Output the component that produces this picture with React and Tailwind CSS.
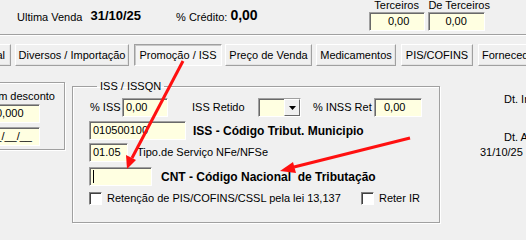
import React from 'react';

const font = { fontFamily: '"Liberation Sans", Arial, sans-serif' };

const sunken =
  'border border-t-[#a0a0a0] border-l-[#a0a0a0] border-r-white border-b-white shadow-[inset_1px_1px_0_#696969]';

const Field = ({ className = '', children }) => (
  <div className={`${sunken} shrink-0 bg-[#ffffe1] h-[19px] flex items-center text-[11px] text-black ${className}`}>
    {children}
  </div>
);

const Tab = ({ label, active, className = '' }) => (
  <div
    className={`shrink-0 h-[22px] flex items-center justify-center text-[11px] whitespace-nowrap overflow-hidden ${
      active
        ? 'border border-t-[#a0a0a0] border-l-[#a0a0a0] border-r-white border-b-white shadow-[inset_1px_1px_0_#c8c8c8] bg-[#f5f5f5]'
        : 'border border-t-white border-l-white border-r-[#a0a0a0] border-b-[#a0a0a0] shadow-[inset_-1px_-1px_0_#e3e3e3]'
    } ${className}`}
  >
    {label}
  </div>
);

const Check = () => (
  <div className="shrink-0 w-[13px] h-[13px] bg-white border border-t-[#808080] border-l-[#808080] border-r-white border-b-white shadow-[inset_1px_1px_0_#404040]" />
);

export default function App() {
  return (
    <div className="relative w-[526px] h-[240px] bg-[#f0f0f0] overflow-hidden text-black" style={font}>
      {/* header */}
      <div className="flex h-[34px] text-[11px]">
        <span className="shrink-0 ml-[17px] mt-[9px] whitespace-nowrap">Ultima Venda</span>
        <span className="shrink-0 ml-[8px] mt-[8px] text-[13px] font-bold leading-[16px]">31/10/25</span>
        <span className="shrink-0 ml-[35px] mt-[9px] whitespace-nowrap">% Crédito:</span>
        <span className="shrink-0 ml-[3px] mt-[7px] text-[14px] font-bold leading-[17px]">0,00</span>
        <div className="shrink-0 ml-[111px] flex flex-col items-center w-[56px] -mt-[1px]">
          <span className="leading-[13px] whitespace-nowrap">Terceiros</span>
          <Field className="w-[56px] justify-center pl-[4px]">0,00</Field>
        </div>
        <div className="shrink-0 ml-[3px] flex flex-col items-center w-[57px] -mt-[1px]">
          <span className="leading-[13px] ml-[6px] whitespace-nowrap">De Terceiros</span>
          <Field className="w-[57px] justify-center">0,00</Field>
        </div>
      </div>
      <div className="h-[2px] border-t border-t-[#a0a0a0] border-b border-b-white" />

      {/* tabs */}
      <div className="flex items-start mt-[8px] h-[22px] gap-[4px]">
        <Tab label="Fiscal" className="w-[40px] -ml-[29px] justify-end pr-[5px]" />
        <Tab label="Diversos / Importação" className="w-[114px]" />
        <Tab label="Promoção / ISS" active className="w-[88px] ml-[1px]" />
        <Tab label="Preço de Venda" className="w-[87px] -ml-[1px]" />
        <Tab label="Medicamentos" className="w-[80px]" />
        <Tab label="PIS/COFINS" className="w-[72px] ml-[1px]" />
        <Tab label="Fornecedores" className="w-[70px] ml-[1px] justify-start pl-[3px]" />
      </div>

      {/* body */}
      <div className="flex items-start text-[11px]">
        <div className="shrink-0 -ml-[30px] mt-[16px] w-[95px] h-[68px] border border-[#a0a0a0] shadow-[1px_1px_0_white,inset_1px_1px_0_white] flex flex-col items-end pr-[24px]">
          <span className="mt-[7px] whitespace-nowrap leading-[13px] -mr-[15px]">Preço com desconto</span>
          <Field className="w-[48px] mt-[1px] pl-[3px]">0,000</Field>
          <Field className="w-[70px] mt-[4px] justify-end pr-[7px]">__/__/__</Field>
        </div>

        <fieldset className="shrink-0 ml-[7px] mt-[14px] w-[368px] h-[143px] border border-[#a0a0a0] shadow-[1px_1px_0_white,inset_1px_1px_0_white] pl-[16px]">
          <legend className="ml-[8px] px-[3px] leading-[13px] text-[11px]">ISS / ISSQN</legend>
          <div className="flex items-center mt-[5px] h-[19px]">
            <span className="shrink-0 ml-[1px] w-[32px] whitespace-nowrap">% ISS</span>
            <Field className="w-[46px] pl-[3px]">0,00</Field>
            <span className="shrink-0 ml-[24px] w-[66px] whitespace-nowrap">ISS Retido</span>
            <div className={`${sunken} shrink-0 bg-[#ffffe1] w-[43px] h-[19px] flex justify-end`}>
              <div className="w-[16px] h-full bg-[#f0f0f0] border border-t-white border-l-white border-r-[#696969] border-b-[#696969] flex items-center justify-center">
                <svg width="7" height="4" viewBox="0 0 7 4">
                  <path d="M0 0h7L3.5 4z" fill="#000" />
                </svg>
              </div>
            </div>
            <span className="shrink-0 ml-[12px] w-[61px] whitespace-nowrap">% INSS Ret</span>
            <Field className="w-[48px] pl-[9px]">0,00</Field>
          </div>
          <div className="flex items-center mt-[4px] h-[19px]">
            <Field className="w-[97px] pl-[3px]">010500100</Field>
            <span className="ml-[7px] text-[12px] font-bold whitespace-nowrap">ISS - Código Tribut. Municipio</span>
          </div>
          <div className="flex items-center mt-[3px] h-[19px]">
            <Field className="w-[39px] pl-[3px]">01.05</Field>
            <span className="ml-[9px] whitespace-nowrap">Tipo.de Serviço NFe/NFSe</span>
          </div>
          <div className="flex items-center mt-[5px] h-[19px]">
            <Field className="w-[63px] pl-[3px]">
              <div className="w-[1px] h-[13px] bg-black" />
            </Field>
            <span className="ml-[9px] text-[12px] font-bold whitespace-nowrap">CNT - Código Nacional&nbsp; de Tributação</span>
          </div>
          <div className="flex items-center mt-[5px] h-[14px]">
            <Check />
            <span className="shrink-0 ml-[5px] whitespace-nowrap w-[254px]">Retenção de PIS/COFINS/CSSL pela lei 13,137</span>
            <Check />
            <span className="ml-[5px] whitespace-nowrap">Reter IR</span>
          </div>
        </fieldset>

        <div className="shrink-0 ml-[40px] mt-[27px] flex flex-col whitespace-nowrap leading-[13px]">
          <span className="ml-[24px]">Dt. Inclusão</span>
          <span className="ml-[24px] mt-[25px]">Dt. Alteração</span>
          <span className="mt-[2px]">31/10/25</span>
        </div>
      </div>

      {/* red annotation arrows */}
      <svg className="absolute inset-0 pointer-events-none" width="526" height="240" viewBox="0 0 526 240">
        <line x1="183" y1="61" x2="132" y2="158" stroke="#ff1010" strokeWidth="3" />
        <polygon points="127,169 136,160 126,155" fill="#ff1010" />
        <line x1="410" y1="138" x2="294" y2="167" stroke="#ff1010" strokeWidth="3" />
        <polygon points="280,171 296,173 293,162" fill="#ff1010" />
      </svg>
    </div>
  );
}
